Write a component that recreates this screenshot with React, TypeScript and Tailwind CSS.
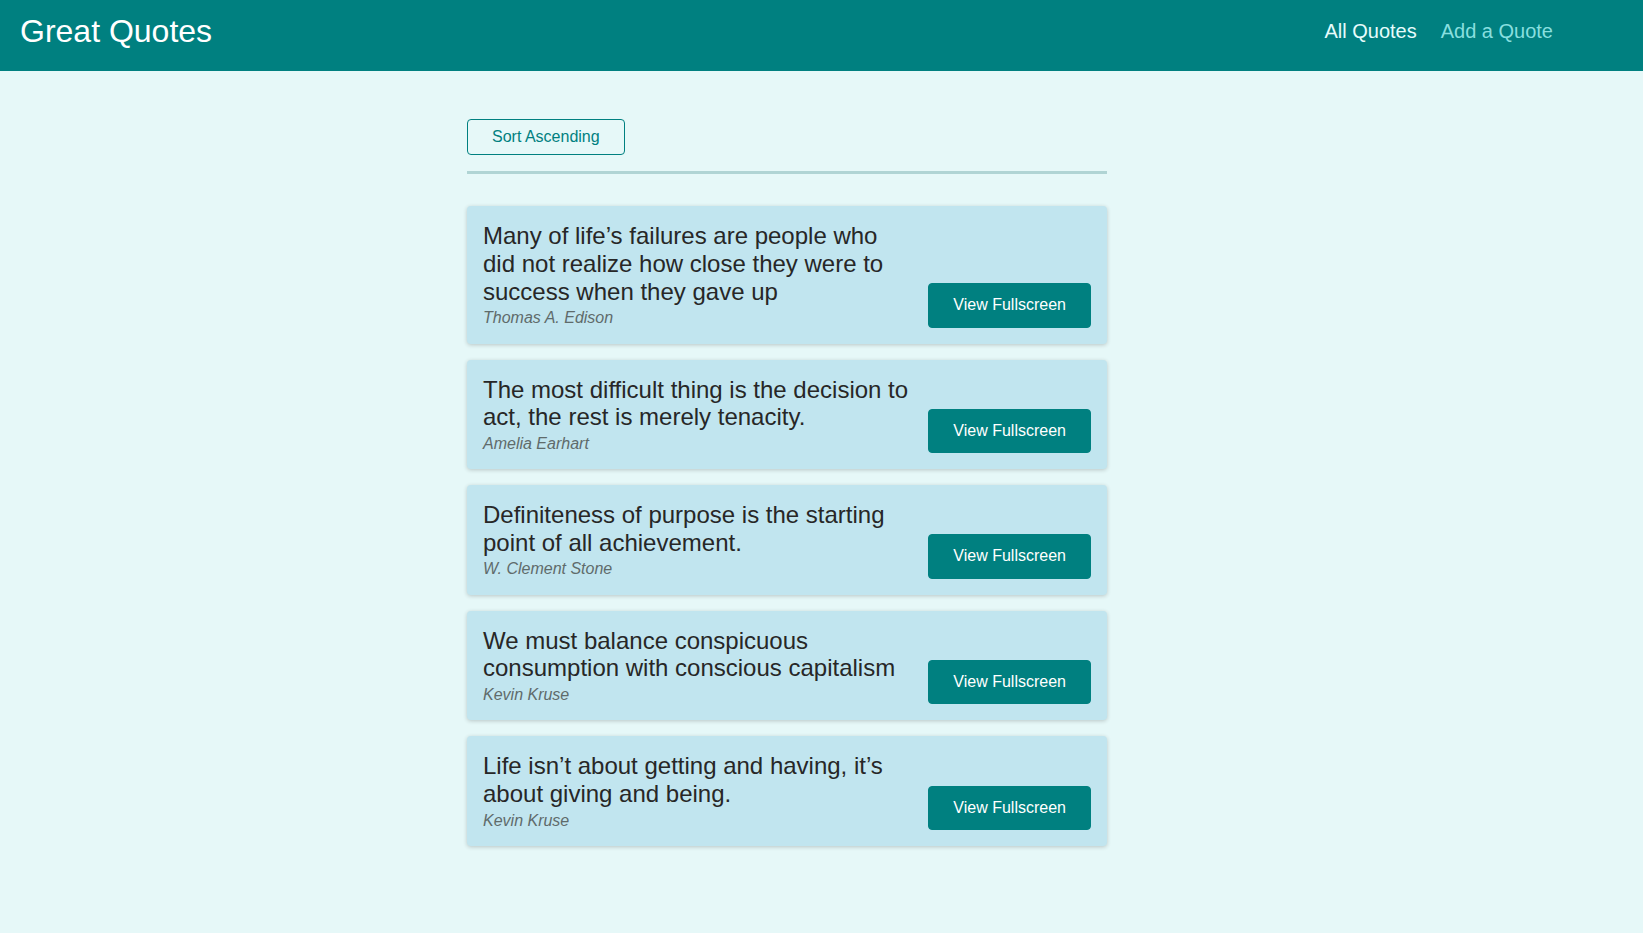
const quotes = [
  {
    id: "q1",
    text: "Many of life’s failures are people who did not realize how close they were to success when they gave up",
    author: "Thomas A. Edison",
  },
  {
    id: "q2",
    text: "The most difficult thing is the decision to act, the rest is merely tenacity.",
    author: "Amelia Earhart",
  },
  {
    id: "q3",
    text: "Definiteness of purpose is the starting point of all achievement.",
    author: "W. Clement Stone",
  },
  {
    id: "q4",
    text: "We must balance conspicuous consumption with conscious capitalism",
    author: "Kevin Kruse",
  },
  {
    id: "q5",
    text: "Life isn’t about getting and having, it’s about giving and being.",
    author: "Kevin Kruse",
  },
];

function QuoteItem({ text, author }: { text: string; author: string }) {
  return (
    <li className="flex items-end justify-between gap-4 rounded bg-[#c1e5ef] p-4 shadow-[0_1px_4px_rgba(0,0,0,0.2)]">
      <figure className="flex-1">
        <blockquote className="text-[24px] leading-[27.6px] text-[#272727]">{text}</blockquote>
        <figcaption className="mt-1 text-[16px] leading-[18.4px] italic text-[#5f6b6b]">{author}</figcaption>
      </figure>
      <a
        href="#"
        className="rounded border border-[#008080] bg-[#008080] px-6 py-3 text-[16px] leading-[18.4px] whitespace-nowrap text-white"
      >
        View Fullscreen
      </a>
    </li>
  );
}

export default function App() {
  return (
    <div className="min-h-screen bg-[#e6f8f8] font-['Liberation_Sans',Arial,sans-serif]">
      <header className="flex h-[71px] items-start justify-between bg-[#008080] pl-5 pr-[90px]">
        <div className="mt-[13px] text-[32px] leading-[36.8px] text-white">Great Quotes</div>
        <nav className="mt-[20px]">
          <ul className="flex gap-6 text-[20px] leading-[23px]">
            <li>
              <a href="#" className="text-[#e6fcfc]">
                All Quotes
              </a>
            </li>
            <li>
              <a href="#" className="text-[#88dfdf]">
                Add a Quote
              </a>
            </li>
          </ul>
        </nav>
      </header>

      <main className="pl-[467px] pt-12">
        <div className="w-[640px]">
          <div className="border-b-[3px] border-[#b0d4d4] pb-4">
            <button
              type="button"
              className="rounded border border-[#008080] px-6 py-2 text-[16px] leading-[18.4px] text-[#008080]"
            >
              Sort Ascending
            </button>
          </div>
          <ul className="mt-8 flex flex-col gap-4 pb-12">
            {quotes.map((q) => (
              <QuoteItem key={q.id} text={q.text} author={q.author} />
            ))}
          </ul>
        </div>
      </main>
    </div>
  );
}
